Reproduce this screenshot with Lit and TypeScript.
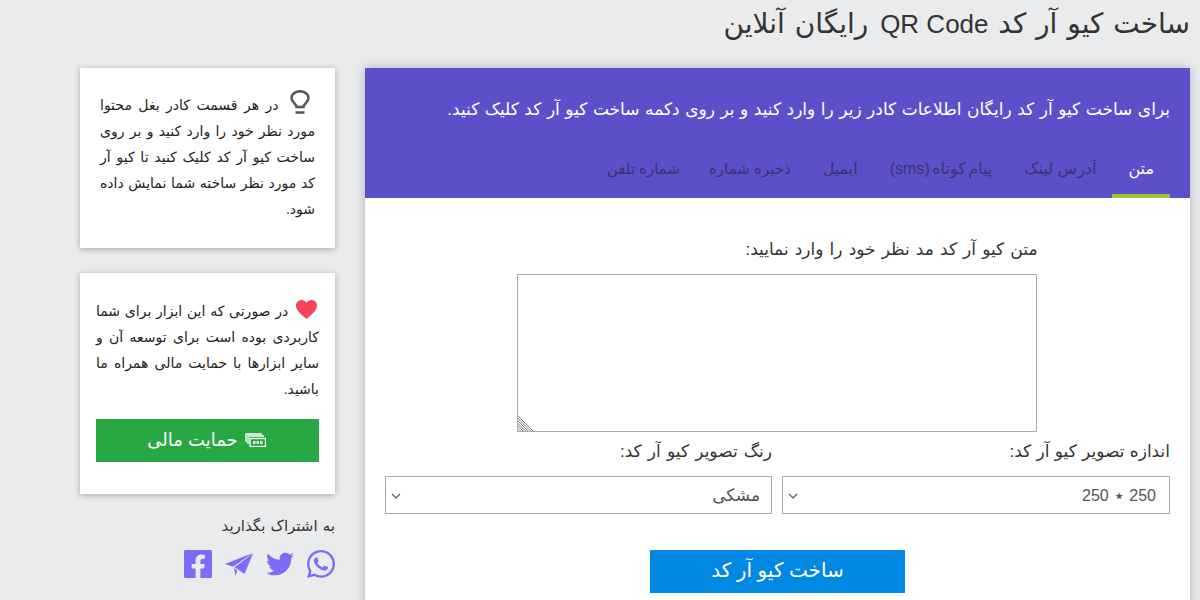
import { LitElement, html, css, svg } from "lit";
import { customElement } from "lit/decorators.js";

const tabs = [
  { label: "متن", cls: "on" },
  { label: "آدرس لینک", cls: "" },
  { label: "پیام کوتاه (sms)", cls: "tight" },
  { label: "ایمیل", cls: "" },
  { label: "ذخیره شماره", cls: "narrow" },
  { label: "شماره تلفن", cls: "narrow last" },
];

@customElement("app-root")
export class AppRoot extends LitElement {
  static styles = css`
    :host {
      display: block;
      height: 600px;
      overflow: hidden;
      background: #e9ebed;
      font-family: "Liberation Sans", "DejaVu Sans", sans-serif;
      color: #333;
      direction: rtl;
    }
    h1 {
      margin: 0;
      padding: 5px 10px 0 0;
      height: 68px;
      box-sizing: border-box;
      font-size: 28px;
      word-spacing: 2px;
      line-height: 38px;
      font-weight: 400;
      color: #333;
    }
    .latin {
      font-size: 26px;
      word-spacing: 0;
      margin-left: 2px;
    }
    .layout {
      display: flex;
      gap: 30px;
      padding: 0 10px 0 80px;
      align-items: flex-start;
    }
    .main {
      flex: 1;
      background: #fff;
      box-shadow: 0 0 10px rgba(0, 0, 0, 0.25);
      height: 560px;
    }
    .head {
      background: #5b50c9;
      height: 130px;
      padding: 0 20px;
      display: flex;
      flex-direction: column;
    }
    .lead {
      margin: 0;
      padding-top: 29px;
      height: 72px;
      box-sizing: border-box;
      color: #fff;
      font-size: 17px;
      word-spacing: 0.8px;
      line-height: 26px;
    }
    .tabs {
      display: flex;
      height: 58px;
    }
    .tab {
      padding: 0 16px;
      font-size: 16px;
      line-height: 58px;
      color: #37356c;
      box-sizing: border-box;
    }
    .tab.on {
      color: #fff;
      border-bottom: 4px solid #a0c334;
    }
    .tab.tight {
      word-spacing: -2px;
    }
    .tab.narrow {
      font-size: 15px;
      letter-spacing: -0.3px;
    }
    .tab.last {
      padding-right: 13px;
    }
    .form {
      padding: 40px 20px 0;
    }
    .tlabel {
      width: 520px;
      margin: 0 auto;
      font-size: 17px;
      word-spacing: 1.4px;
      line-height: 24px;
      color: #333;
    }
    .area {
      position: relative;
      width: 520px;
      margin: 12px auto 0;
      left: -1px;
    }
    textarea {
      display: block;
      width: 100%;
      height: 158px;
      box-sizing: border-box;
      border: 1px solid #a9a6bc;
      border-radius: 0;
      background: #fff;
      outline: none;
      resize: none;
    }
    .grip {
      position: absolute;
      left: 1px;
      bottom: 1px;
      display: block;
    }
    .fields {
      display: flex;
      gap: 10px;
      margin-top: 8px;
    }
    .field {
      flex: 1;
    }
    .field.size {
      flex: none;
      width: 388px;
    }
    .field label {
      display: block;
      font-size: 17px;
      word-spacing: 0.6px;
      line-height: 24px;
      color: #333;
      margin-bottom: 12px;
    }
    .field.color label {
      word-spacing: 1.5px;
    }
    select {
      display: block;
      width: 100%;
      height: 38px;
      box-sizing: border-box;
      appearance: none;
      -webkit-appearance: none;
      border: 1px solid #a9a6bc;
      border-radius: 0;
      padding: 0 13px 0 0;
      font: 16px "Liberation Sans", "DejaVu Sans", sans-serif;
      word-spacing: 1.5px;
      color: #555;
      outline: none;
      background: #fff url("data:image/svg+xml,%3Csvg xmlns='http://www.w3.org/2000/svg' width='10' height='6'%3E%3Cpath d='M1 1l4 4 4-4' fill='none' stroke='%23555' stroke-width='1.2'/%3E%3C/svg%3E") no-repeat 5px 16px;
    }
    select.fa {
      font-size: 17px;
      padding-right: 11px;
    }
    .submit {
      display: block;
      width: 255px;
      height: 43px;
      margin: 36px auto 0;
      padding: 0 0 4px;
      border: 0;
      background: #0088e2;
      color: #fff;
      font: 20px "Liberation Sans", "DejaVu Sans", sans-serif;
    }
    .side {
      width: 255px;
      flex: none;
      display: flex;
      flex-direction: column;
    }
    .box {
      background: #fff;
      box-shadow: 0 1px 6px rgba(0, 0, 0, 0.3);
      font-size: 14px;
      line-height: 26px;
      color: #222;
      box-sizing: border-box;
    }
    .tip {
      height: 180px;
      padding: 24px 20px 0 20px;
      margin-bottom: 25px;
      text-align: justify;
    }
    .donate {
      height: 221px;
      padding: 25px 16px 0;
      text-align: justify;
    }
    .bulb {
      vertical-align: -4px;
      margin: -8px 5px 0 5px;
    }
    .heart {
      vertical-align: -3px;
      margin: -4px 2px 0 3px;
    }
    .pay {
      display: flex;
      align-items: center;
      justify-content: center;
      gap: 7px;
      height: 43px;
      margin-top: 17px;
      padding: 0 2px 2px 0;
      box-sizing: border-box;
      background: #28a745;
      color: #fff;
      font-size: 18px;
    }
    .share {
      margin-top: 20px;
      font-size: 15px;
      word-spacing: 1px;
      line-height: 24px;
      color: #333;
    }
    .icons {
      display: flex;
      align-items: center;
      gap: 13px;
      margin-top: 12px;
      height: 28px;
      color: #7a6bf8;
    }
    .icons svg {
      display: block;
      fill: currentColor;
    }
  `;

  render() {
    return html`
      <h1>ساخت کیو آر کد <span class="latin">QR Code</span> رایگان آنلاین</h1>
      <div class="layout">
        <section class="main">
          <div class="head">
            <p class="lead">برای ساخت کیو آر کد رایگان اطلاعات کادر زیر را وارد کنید و بر روی دکمه ساخت کیو آر کد کلیک کنید.</p>
            <nav class="tabs">
              ${tabs.map((t) => html`<div class="tab ${t.cls}">${t.label}</div>`)}
            </nav>
          </div>
          <div class="form">
            <div class="tlabel">متن کیو آر کد مد نظر خود را وارد نمایید:</div>
            <div class="area">
              <textarea></textarea>
              <svg class="grip" width="15" height="15" viewBox="0 0 15 15" stroke="#808080" stroke-width="1">
                <path d="M0 0l15 15M0 2.500l12.500 12.500M0 5l10 10M0 7.500l7.500 7.500M0 10l5 5M0 12.500l2.500 2.500"/>
              </svg>
            </div>
            <div class="fields">
              <div class="field size">
                <label>اندازه تصویر کیو آر کد:</label>
                <select><option>250 ٭ 250</option></select>
              </div>
              <div class="field color">
                <label>رنگ تصویر کیو آر کد:</label>
                <select class="fa"><option>مشکی</option></select>
              </div>
            </div>
            <button class="submit">ساخت کیو آر کد</button>
          </div>
        </section>
        <aside class="side">
          <div class="box tip">
            <svg class="bulb" width="20" height="24" viewBox="0 0 20 24" fill="none" stroke="#555" stroke-width="2.500">
              <path d="M6.500 17c0-3.500-5-4.500-5-9a8.500 6.800 0 0 1 17 0c0 4.500-5 5.500-5 9z"/>
              <path d="M5.500 22.500h9"/>
            </svg>
            در هر قسمت کادر بغل محتوا مورد نظر خود را وارد کنید و بر روی ساخت کیو آر کد کلیک کنید تا کیو آر کد مورد نظر ساخته شما نمایش داده شود.
          </div>
          <div class="box donate">
            <svg class="heart" width="21" height="19" viewBox="0 0 21 19">
              <path fill="#f5455c" d="M10.500 19C4 13.500 0 10 0 5.500 0 2.300 2.500 0 5.500 0c2 0 3.800 1 5 2.800C11.700 1 13.500 0 15.500 0 18.500 0 21 2.300 21 5.500 21 10 17 13.500 10.500 19z"/>
            </svg>
            در صورتی که این ابزار برای شما کاربردی بوده است برای توسعه آن و سایر ابزارها با حمایت مالی همراه ما باشید.
            <div class="pay">
              <svg width="21" height="14" viewBox="0 0 21 14" fill="none" stroke="#fff" stroke-width="1.300">
                <path d="M1 9V1h16"/>
                <path d="M3 11V3h16"/>
                <rect x="5" y="5.500" width="15.500" height="8" fill="#28a745"/>
                <path d="M8 9.500h10" stroke-width="3" stroke-dasharray="2.500 1" stroke="#cfeed6"/>
              </svg>
              حمایت مالی
            </div>
          </div>
          <div class="share">به اشتراک بگذارید</div>
          <div class="icons">
            <svg width="28" height="28" viewBox="0 32 448 448">${svg`<path d="M380.900 97.100C339 55.100 283.200 32 223.900 32c-122.400 0-222 99.600-222 222 0 39.100 10.200 77.300 29.600 111L0 480l117.700-30.900c32.400 17.700 68.900 27 106.100 27h.1c122.300 0 224.100-99.600 224.100-222 0-59.300-25.200-115-67.100-157zm-157 341.600c-33.200 0-65.700-8.900-94-25.700l-6.700-4-69.800 18.300L72 359.200l-4.400-7c-18.500-29.400-28.200-63.300-28.200-98.200 0-101.700 82.800-184.500 184.600-184.500 49.300 0 95.600 19.200 130.400 54.100 34.800 34.900 56.200 81.200 56.100 130.500 0 101.800-84.900 184.600-186.600 184.600zm101.200-138.200c-5.500-2.800-32.800-16.200-37.900-18-5.100-1.900-8.800-2.800-12.500 2.800-3.700 5.600-14.300 18-17.600 21.800-3.200 3.700-6.500 4.200-12 1.400-32.600-16.300-54-29.100-75.500-66-5.700-9.800 5.700-9.100 16.300-30.300 1.800-3.700.9-6.900-.5-9.700-1.400-2.800-12.500-30.100-17.100-41.200-4.500-10.800-9.100-9.300-12.500-9.500-3.200-.2-6.900-.2-10.600-.2-3.700 0-9.700 1.400-14.800 6.900-5.100 5.600-19.400 19-19.400 46.300 0 27.300 19.900 53.700 22.600 57.400 2.800 3.700 39.100 59.700 94.800 83.800 35.200 15.200 49 16.500 66.600 13.900 10.700-1.600 32.800-13.400 37.400-26.400 4.600-13 4.600-24.100 3.200-26.400-1.300-2.500-5-3.900-10.500-6.600z"/>`}</svg>
            <svg width="28" height="28" viewBox="0 0 512 512">${svg`<path d="M459.370 151.716c.325 4.548.325 9.097.325 13.645 0 138.720-105.583 298.558-298.558 298.558-59.452 0-114.680-17.219-161.137-47.106 8.447.974 16.568 1.299 25.340 1.299 49.055 0 94.213-16.568 130.274-44.832-46.132-.975-84.792-31.188-98.112-72.772 6.498.974 12.995 1.624 19.818 1.624 9.421 0 18.843-1.300 27.614-3.573-48.081-9.747-84.143-51.980-84.143-102.985v-1.299c13.969 7.797 30.214 12.670 47.431 13.319-28.264-18.843-46.781-51.005-46.781-87.391 0-19.492 5.197-37.360 14.294-52.954 51.655 63.675 129.300 105.258 216.365 109.807-1.624-7.797-2.599-15.918-2.599-24.040 0-57.828 46.782-104.934 104.934-104.934 30.213 0 57.502 12.670 76.670 33.137 23.715-4.548 46.456-13.320 66.599-25.340-7.798 24.366-24.366 44.833-46.132 57.827 21.117-2.273 41.584-8.122 60.426-16.243-14.292 20.791-32.161 39.308-52.628 54.253z"/>`}</svg>
            <svg width="28" height="23" viewBox="0 0 28 23">${svg`<path d="M0 11 28 0 8 13.700z"/><path d="M9.500 14.200 28 .5 19.500 21 13 16.500z"/><path d="M9 15l3.200 2.500L10.500 23z"/>`}</svg>
            <svg width="28" height="28" viewBox="0 32 448 448">${svg`<path d="M424 32H24A24 24 0 0 0 0 56v400a24 24 0 0 0 24 24h161.250V327.690h-63V256h63v-54.640c0-62.150 37-96.480 93.670-96.480 27.140 0 55.520 4.840 55.520 4.840v61h-31.270c-30.810 0-40.420 19.120-40.420 38.730V256h68.780l-11 71.690h-57.780V480H424a24 24 0 0 0 24-24V56a24 24 0 0 0-24-24z"/>`}</svg>
          </div>
        </aside>
      </div>
    `;
  }
}
